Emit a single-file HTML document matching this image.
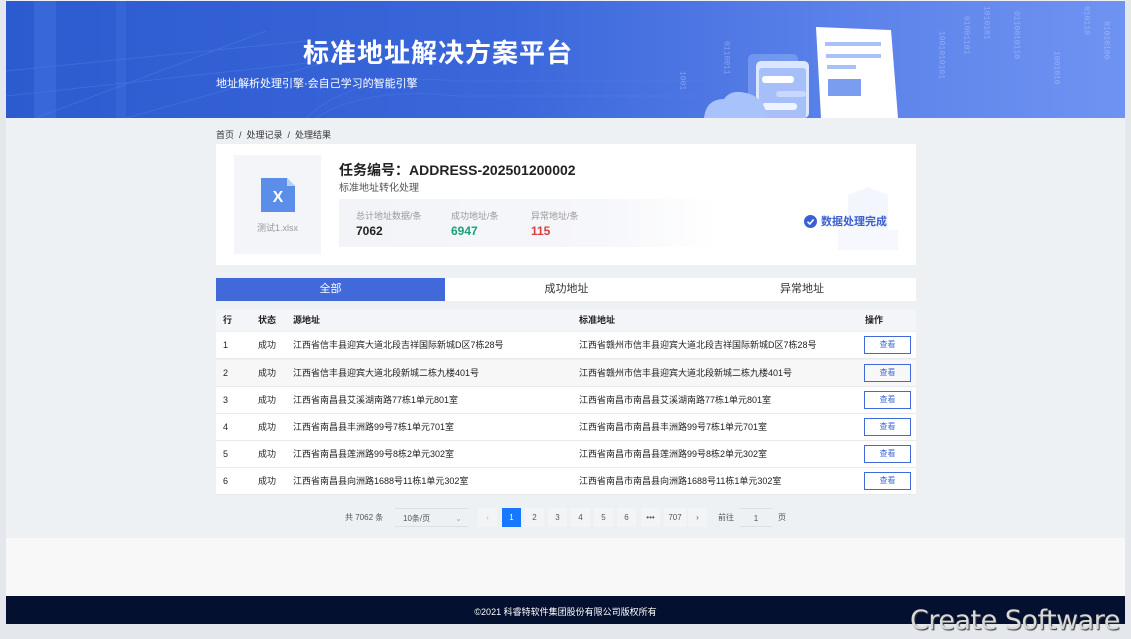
<!DOCTYPE html>
<html><head><meta charset="utf-8"><style>
*{margin:0;padding:0;box-sizing:border-box}
body{width:1131px;height:639px;background:#e4e8ec;font-family:"Liberation Sans","Noto Sans CJK SC",sans-serif;position:relative;overflow:hidden;color:#222}
.a{position:absolute}
#frame{left:6px;top:0;width:1119px;height:624px;background:#eef1f4}
#hdr{left:6px;top:1px;width:1119px;height:117px;background:linear-gradient(90deg,#2c5bd0 0%,#3a67da 45%,#5b82ea 75%,#6f93f2 100%);overflow:hidden}
.title{left:303px;top:33px;font-size:26px;font-weight:bold;color:#fff;letter-spacing:1px}
.sub{left:216px;top:75px;font-size:11px;color:#fff}
.bc{left:216px;top:128px;font-size:9px;color:#333}
.card{left:216px;top:144px;width:700px;height:121px;background:#fff}
.fbox{left:234px;top:155px;width:87px;height:99px;background:#f3f5f9}
.stats{left:339px;top:199px;width:380px;height:48px;background:linear-gradient(90deg,#f2f4f8,#f6f7fb 70%,#fff)}
.lbl{font-size:9px;color:#999;top:209px}
.val{font-size:12px;font-weight:bold;top:224px}
.tab{top:278px;height:23px;font-size:11px;text-align:center;line-height:23px;background:#fff;color:#333}
.th{left:216px;top:309px;width:700px;height:22px;background:#f3f5f8;font-size:9px;font-weight:bold}
.row{left:216px;width:700px;height:27px;background:#fff;font-size:9px;border-bottom:1px solid #e8eaee}
.row span,.th span{position:absolute;top:0;line-height:inherit}
.btn{position:absolute;left:648px;top:4px;width:47px;height:18px;border:1.5px solid #4169d9;color:#4169d9;font-size:8px;text-align:center;line-height:15px}
.pg{top:508px;height:19px;font-size:8px;line-height:19px;text-align:center;color:#555}
.pb{width:19px;background:#f3f4f6}
</style></head><body>
<div id="frame" class="a"></div>
<div id="hdr" class="a">
<svg width="1119" height="117" style="position:absolute;left:0;top:0">
<g stroke="#5b86e8" stroke-opacity=".35" fill="none">
<path d="M0 70 L300 40 M0 95 L320 60 M30 117 L260 30 M120 117 L360 50"/>
<path d="M300 117 Q350 70 450 80 L700 80" stroke-opacity=".3"/>
<path d="M310 117 Q360 85 450 95 L700 95" stroke-opacity=".3"/>
</g>
<rect x="28" y="0" width="22" height="117" fill="#4a7be6" opacity=".35"/>
<rect x="110" y="0" width="10" height="117" fill="#4a7be6" opacity=".25"/>
<g fill="#c9d8ff" opacity=".45" font-size="8" font-family="Liberation Mono">
<text x="935" y="30" writing-mode="tb">1001010101</text>
<text x="960" y="15" writing-mode="tb">01001101</text>
<text x="980" y="5" writing-mode="tb">1010101</text>
<text x="1010" y="10" writing-mode="tb">0110010110</text>
<text x="1050" y="50" writing-mode="tb">1001010</text>
<text x="1080" y="5" writing-mode="tb">010110</text>
<text x="676" y="70" writing-mode="tb">1001</text>
<text x="720" y="40" writing-mode="tb">0110011</text>
<text x="1100" y="20" writing-mode="tb">01010100</text>
</g>
<rect x="742" y="53" width="50" height="64" rx="5" fill="#89a8f5" opacity=".6"/>
<rect x="750" y="60" width="53" height="57" rx="5" fill="#dce6ff"/>
<rect x="753" y="67" width="47" height="50" rx="3" fill="#a6bff9"/>
<rect x="756" y="75" width="32" height="7" rx="3" fill="#fff"/>
<rect x="770" y="90" width="30" height="6" rx="3" fill="#c8d7ff"/>
<rect x="756" y="102" width="35" height="7" rx="3" fill="#eef3ff"/>
<path d="M810 26 L885 29 L892 117 L815 117 Z" fill="#fff"/>
<rect x="819" y="41" width="56" height="4" fill="#a9c1fa"/>
<rect x="820" y="53" width="55" height="4" fill="#a9c1fa"/>
<rect x="821" y="64" width="29" height="4" fill="#a9c1fa"/>
<rect x="822" y="78" width="33" height="17" fill="#7a9df0"/>
<path d="M698 117 Q700 98 718 98 Q725 88 740 92 Q755 95 760 110 L762 117 Z" fill="#a8c3fb"/>
</svg>
</div>
<div class="a title">标准地址解决方案平台</div>
<div class="a sub">地址解析处理引擎·会自己学习的智能引擎</div>
<div class="a bc">首页 &nbsp;/&nbsp; 处理记录 &nbsp;/&nbsp; 处理结果</div>
<div class="a card"></div>
<div class="a fbox"></div>
<svg class="a" style="left:261px;top:178px" width="34" height="34"><path d="M0 0H26L34 8V34H0Z" fill="#5b8ee8"/><path d="M26 0V8H34Z" fill="#b9d0f7"/><text x="17" y="24" fill="#fff" font-size="16" font-weight="bold" text-anchor="middle" font-family="Liberation Sans">X</text></svg>
<div class="a" style="left:234px;top:221px;width:87px;text-align:center;font-size:9px;color:#999">测试1.xlsx</div>
<div class="a" style="left:339px;top:160px;font-size:14px;font-weight:bold;color:#222">任务编号：ADDRESS-202501200002</div>
<div class="a" style="left:339px;top:179px;font-size:10px;color:#555">标准地址转化处理</div>
<div class="a stats"></div>
<div class="a lbl" style="left:356px">总计地址数据/条</div>
<div class="a lbl" style="left:451px">成功地址/条</div>
<div class="a lbl" style="left:531px">异常地址/条</div>
<div class="a val" style="left:356px;color:#222">7062</div>
<div class="a val" style="left:451px;color:#1aa17a">6947</div>
<div class="a val" style="left:531px;color:#d8403f">115</div>
<svg class="a" style="left:838px;top:185px" width="60" height="70" opacity=".5"><path d="M10 10 L30 2 L50 10 L50 55 L10 55Z" fill="#e9eefb"/><rect x="0" y="45" width="60" height="20" fill="#f0f3fc"/></svg>
<svg class="a" style="left:804px;top:215px" width="13" height="13"><circle cx="6.5" cy="6.5" r="6.5" fill="#3a5fd0"/><path d="M3.5 6.8L5.8 9L9.6 4.5" stroke="#fff" stroke-width="1.6" fill="none"/></svg>
<div class="a" style="left:821px;top:213px;font-size:11px;font-weight:bold;color:#3a5fd0">数据处理完成</div>
<div class="a tab" style="left:216px;width:229px;background:#4169d9;color:#fff">全部</div>
<div class="a tab" style="left:445px;width:243px">成功地址</div>
<div class="a tab" style="left:688px;width:228px">异常地址</div>
<div class="a th" style="line-height:22px"><span style="left:7px">行</span><span style="left:42px">状态</span><span style="left:77px">源地址</span><span style="left:363px">标准地址</span><span style="left:649px">操作</span></div>
<div class="a row" style="top:332px;line-height:27px"><span style="left:7px">1</span><span style="left:42px">成功</span><span style="left:77px">江西省信丰县迎宾大道北段吉祥国际新城D区7栋28号</span><span style="left:363px">江西省赣州市信丰县迎宾大道北段吉祥国际新城D区7栋28号</span><div class="btn">查看</div></div>
<div class="a row" style="top:360px;line-height:27px;background:#f7f7f8"><span style="left:7px">2</span><span style="left:42px">成功</span><span style="left:77px">江西省信丰县迎宾大道北段新城二栋九楼401号</span><span style="left:363px">江西省赣州市信丰县迎宾大道北段新城二栋九楼401号</span><div class="btn">查看</div></div>
<div class="a row" style="top:387px;line-height:27px"><span style="left:7px">3</span><span style="left:42px">成功</span><span style="left:77px">江西省南昌县艾溪湖南路77栋1单元801室</span><span style="left:363px">江西省南昌市南昌县艾溪湖南路77栋1单元801室</span><div class="btn">查看</div></div>
<div class="a row" style="top:414px;line-height:27px"><span style="left:7px">4</span><span style="left:42px">成功</span><span style="left:77px">江西省南昌县丰洲路99号7栋1单元701室</span><span style="left:363px">江西省南昌市南昌县丰洲路99号7栋1单元701室</span><div class="btn">查看</div></div>
<div class="a row" style="top:441px;line-height:27px"><span style="left:7px">5</span><span style="left:42px">成功</span><span style="left:77px">江西省南昌县莲洲路99号8栋2单元302室</span><span style="left:363px">江西省南昌市南昌县莲洲路99号8栋2单元302室</span><div class="btn">查看</div></div>
<div class="a row" style="top:468px;line-height:27px"><span style="left:7px">6</span><span style="left:42px">成功</span><span style="left:77px">江西省南昌县向洲路1688号11栋1单元302室</span><span style="left:363px">江西省南昌市南昌县向洲路1688号11栋1单元302室</span><div class="btn">查看</div></div>
<div class="a pg" style="left:345px">共 7062 条</div>
<div class="a pg" style="left:395px;width:73px;border-top:1px solid #dcdfe6;border-bottom:1px solid #dcdfe6;text-align:left;padding-left:8px">10条/页<span style="position:absolute;right:6px;color:#aaa">⌄</span></div>
<div class="a pg pb" style="left:478px;color:#bbb">‹</div>
<div class="a pg pb" style="left:502px;background:#1677ff;color:#fff">1</div>
<div class="a pg pb" style="left:525px">2</div>
<div class="a pg pb" style="left:548px">3</div>
<div class="a pg pb" style="left:571px">4</div>
<div class="a pg pb" style="left:594px">5</div>
<div class="a pg pb" style="left:617px">6</div>
<div class="a pg pb" style="left:641px">•••</div>
<div class="a pg pb" style="left:664px;width:22px">707</div>
<div class="a pg pb" style="left:688px">›</div>
<div class="a pg" style="left:718px">前往</div>
<div class="a pg" style="left:740px;width:32px;border-top:1px solid #dcdfe6;border-bottom:1px solid #dcdfe6">1</div>
<div class="a pg" style="left:778px">页</div>
<div class="a" style="left:6px;top:538px;width:1119px;height:58px;background:#f8f8f8"></div>
<div class="a" style="left:6px;top:596px;width:1119px;height:28px;background:#041030;color:#fff;font-size:9px;text-align:center;line-height:32px">©2021 科睿特软件集团股份有限公司版权所有</div>
<div class="a" style="left:910px;top:605px;font-size:27px;color:#d8d8d8;text-shadow:1px 1px 1px #333;font-family:'DejaVu Sans','Liberation Sans',sans-serif;letter-spacing:-0.5px">Create Software</div>
</body></html>
